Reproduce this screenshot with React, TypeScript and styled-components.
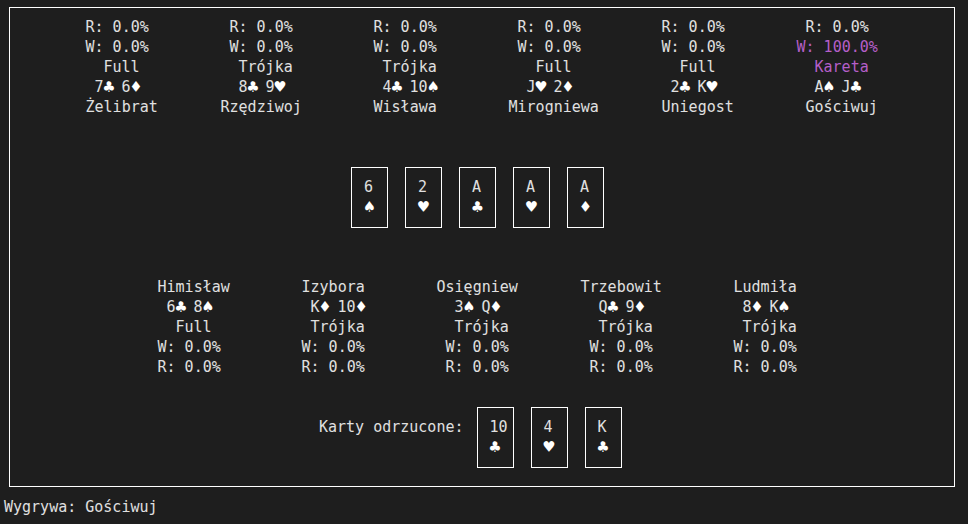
import styled, { createGlobalStyle } from 'styled-components';

const CELL = 9;
const SUITS = '♠♥♣♦';

const GlobalStyle = createGlobalStyle`
  html, body {
    margin: 0;
    padding: 0;
    background: #1e1e1e;
  }
  body {
    color: #e0e0e0;
    font-family: 'DejaVu Sans Mono', 'Liberation Mono', monospace;
    font-size: 15px;
    line-height: 20px;
    height: 524px;
    overflow: hidden;
  }
`;

const Screen = styled.div`
  width: 968px;
  height: 524px;
  padding-top: 7px;
  box-sizing: border-box;
`;

const Table = styled.div`
  margin-left: 9px;
  width: 946px;
  height: 480px;
  border: 1px solid #ffffff;
  box-sizing: border-box;
  padding: 9px 4px 0 3px;
  display: flex;
  flex-direction: column;
`;

const PlayerRow = styled.div<{ $gap?: number }>`
  display: flex;
  justify-content: center;
  margin-top: ${(p) => p.$gap ?? 0}px;
`;

const PlayerCol = styled.div`
  width: ${16 * CELL}px;
  display: flex;
  flex-direction: column;
`;

const Line = styled.div<{ $indent: number; $win?: boolean }>`
  height: 20px;
  white-space: pre;
  padding-left: ${(p) => p.$indent * CELL}px;
  color: ${(p) => (p.$win ? '#b55ec8' : '#e0e0e0')};
`;

const Suit = styled.span`
  display: inline-block;
  width: ${CELL}px;
  text-align: center;
  font-size: 18px;
  line-height: 20px;
  vertical-align: top;
  color: #ffffff;
`;

const CardRow = styled.div<{ $gap: number; $left: number }>`
  display: flex;
  align-items: flex-start;
  gap: 17px;
  margin-top: ${(p) => p.$gap}px;
  padding-left: ${(p) => p.$left}px;
`;

const Card = styled.div`
  width: 37px;
  height: 61px;
  border: 1px solid #ffffff;
  box-sizing: border-box;
  padding: 9px 5px 10px 3px;
`;

const CardText = styled.div<{ $indent: number }>`
  height: 20px;
  white-space: pre;
  color: #e0e0e0;
  padding-left: ${(p) => p.$indent * CELL}px;
`;

const Label = styled.div`
  margin-top: 10px;
  margin-right: -4px;
  white-space: pre;
`;

const Footer = styled.div`
  margin-top: 10px;
  padding-left: 4px;
  white-space: pre;
`;

type Player = {
  name: string;
  cards: string;
  hand: string;
  win: string;
  rate: string;
  winner?: boolean;
};

const top: Player[] = [
  { name: 'Żelibrat', cards: '7♣ 6♦', hand: 'Full', win: '0.0%', rate: '0.0%' },
  { name: 'Rzędziwoj', cards: '8♣ 9♥', hand: 'Trójka', win: '0.0%', rate: '0.0%' },
  { name: 'Wisława', cards: '4♣ 10♠', hand: 'Trójka', win: '0.0%', rate: '0.0%' },
  { name: 'Mirogniewa', cards: 'J♥ 2♦', hand: 'Full', win: '0.0%', rate: '0.0%' },
  { name: 'Uniegost', cards: '2♣ K♥', hand: 'Full', win: '0.0%', rate: '0.0%' },
  { name: 'Gościwuj', cards: 'A♠ J♣', hand: 'Kareta', win: '100.0%', rate: '0.0%', winner: true },
];

const bottom: Player[] = [
  { name: 'Himisław', cards: '6♣ 8♠', hand: 'Full', win: '0.0%', rate: '0.0%' },
  { name: 'Izybora', cards: 'K♦ 10♦', hand: 'Trójka', win: '0.0%', rate: '0.0%' },
  { name: 'Osięgniew', cards: '3♠ Q♦', hand: 'Trójka', win: '0.0%', rate: '0.0%' },
  { name: 'Trzebowit', cards: 'Q♣ 9♦', hand: 'Trójka', win: '0.0%', rate: '0.0%' },
  { name: 'Ludmiła', cards: '8♦ K♠', hand: 'Trójka', win: '0.0%', rate: '0.0%' },
];

const board = [
  ['6', '♠'],
  ['2', '♥'],
  ['A', '♣'],
  ['A', '♥'],
  ['A', '♦'],
];

const discarded = [
  ['10', '♣'],
  ['4', '♥'],
  ['K', '♣'],
];

const len = (s: string) => [...s].length;
// centre a line in a 16-cell column, rounding down like the terminal does
const pad = (s: string) => Math.floor((16 - len(s)) / 2);

// suit glyphs are drawn a little larger, as in the terminal font
const withSuits = (s: string) =>
  [...s].map((ch, i) => (SUITS.includes(ch) ? <Suit key={i}>{ch}</Suit> : ch));

const Cell = ({ text, win }: { text: string; win?: boolean }) => (
  <Line $indent={pad(text)} $win={win}>
    {withSuits(text)}
  </Line>
);

const PlayingCard = ({ rank, suit }: { rank: string; suit: string }) => (
  <Card>
    <CardText $indent={Math.ceil((3 - len(rank)) / 2)}>{rank}</CardText>
    <CardText $indent={1}>
      <Suit>{suit}</Suit>
    </CardText>
  </Card>
);

const App = () => {
  return (
    <Screen>
      <GlobalStyle />
      <Table>
        <PlayerRow>
          {top.map((p) => (
            <PlayerCol key={p.name}>
              <Cell text={`R: ${p.rate}`} />
              <Cell text={`W: ${p.win}`} win={p.winner} />
              <Cell text={p.hand} win={p.winner} />
              <Cell text={p.cards} />
              <Cell text={p.name} />
            </PlayerCol>
          ))}
        </PlayerRow>

        <CardRow $gap={50} $left={338}>
          {board.map(([r, s], i) => (
            <PlayingCard key={i} rank={r} suit={s} />
          ))}
        </CardRow>

        <PlayerRow $gap={49}>
          {bottom.map((p) => (
            <PlayerCol key={p.name}>
              <Cell text={p.name} />
              <Cell text={p.cards} />
              <Cell text={p.hand} />
              <Cell text={`W: ${p.win}`} />
              <Cell text={`R: ${p.rate}`} />
            </PlayerCol>
          ))}
        </PlayerRow>

        <CardRow $gap={30} $left={306}>
          <Label>Karty odrzucone:</Label>
          {discarded.map(([r, s], i) => (
            <PlayingCard key={i} rank={r} suit={s} />
          ))}
        </CardRow>
      </Table>
      <Footer>Wygrywa: Gościwuj</Footer>
    </Screen>
  );
};

export default App;
